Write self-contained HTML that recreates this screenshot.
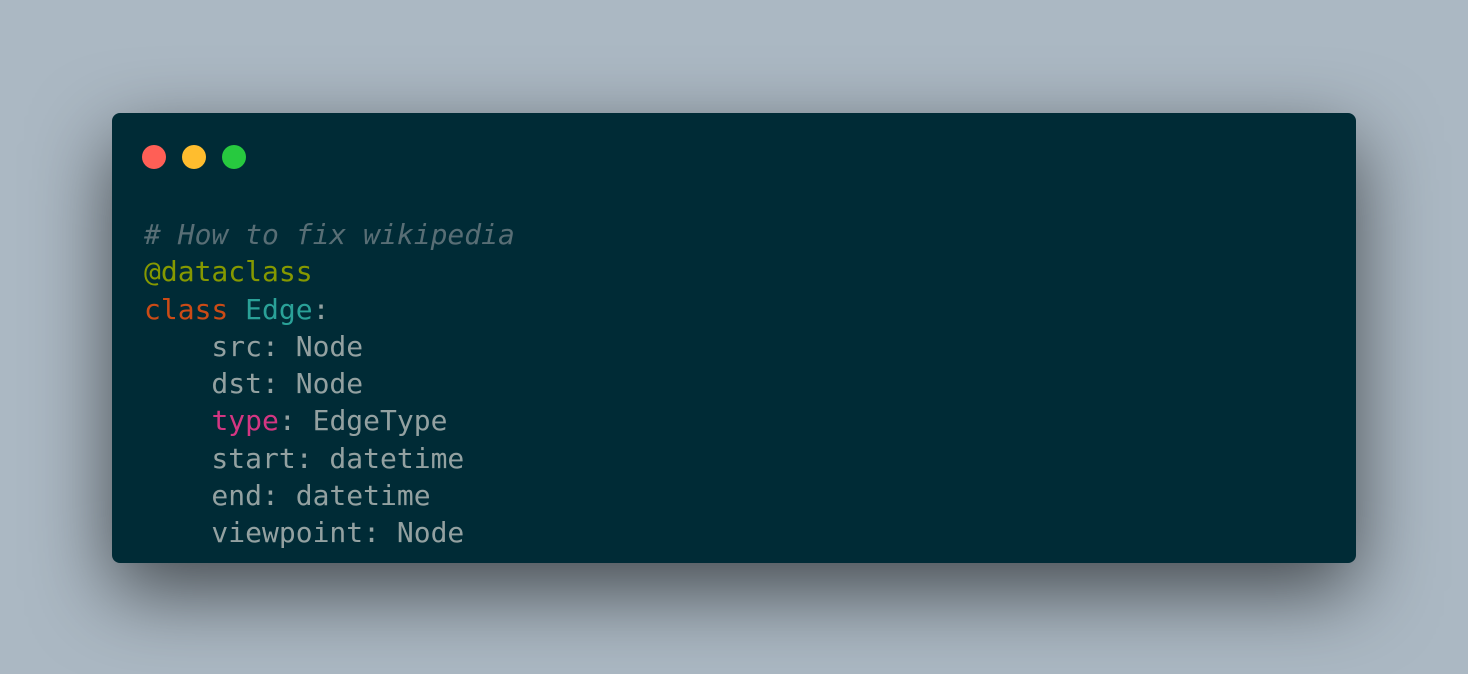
<!DOCTYPE html>
<html><head><meta charset="utf-8"><style>
html,body{margin:0;padding:0;}
body{width:1468px;height:674px;background:#abb8c3;position:relative;overflow:hidden;}
.win{position:absolute;left:112px;top:113px;width:1244px;height:450px;background:#002b36;border-radius:8px;box-shadow:0 28px 80px rgba(0,0,0,0.6);}
.dot{position:absolute;top:32px;width:24px;height:24px;border-radius:50%;}
pre{position:absolute;left:32px;top:103px;margin:0;font-family:"DejaVu Sans Mono","Liberation Mono",monospace;font-size:28px;line-height:37.25px;color:#93a1a1;}
.c{color:#586e75;font-style:italic}.d{color:#859900}.k{color:#cb4b16}.n{color:#2aa198}.t{color:#d33682}
</style></head><body>
<div class="win">
<div class="dot" style="left:30px;background:#ff5f56"></div>
<div class="dot" style="left:70px;background:#ffbd2e"></div>
<div class="dot" style="left:110px;background:#27c93f"></div>
<pre><span class="c"># How to fix wikipedia</span>
<span class="d">@dataclass</span>
<span class="k">class</span> <span class="n">Edge</span>:
    src: Node
    dst: Node
    <span class="t">type</span>: EdgeType
    start: datetime
    end: datetime
    viewpoint: Node</pre>
</div>
</body></html>
